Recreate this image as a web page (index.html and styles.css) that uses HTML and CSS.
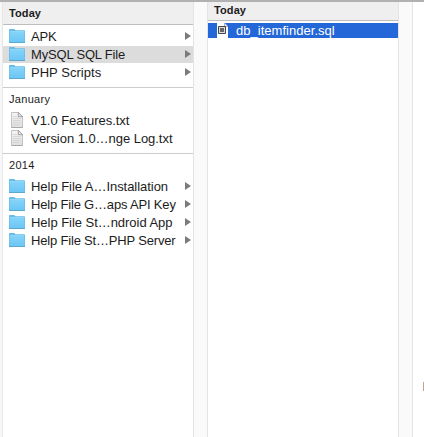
FILE: index.html
```html
<!DOCTYPE html>
<html lang="en">
<head>
<meta charset="utf-8">
<title>Finder</title>
<link rel="stylesheet" href="styles.css">
</head>
<body>
<svg class="defs" width="0" height="0" aria-hidden="true">
  <defs>
    <linearGradient id="blue" x1="0" y1="0" x2="0" y2="1"><stop offset="0" stop-color="#84d3f9"/><stop offset="1" stop-color="#6cc6f5"/></linearGradient>
    <linearGradient id="paper" x1="0" y1="0" x2="0" y2="1"><stop offset="0" stop-color="#f6f6f6"/><stop offset="1" stop-color="#dedede"/></linearGradient>
    <symbol id="folder" viewBox="0 0 16 14">
      <path d="M0 .8Q0 0 .9 0H5.2L6.6 1.2H15.2Q16 1.2 16 2V14H0Z" fill="#68bde6"/>
      <path d="M.7 3H15.3V13H.7Z" fill="url(#blue)"/>
      <path d="M.7 2.5H15.3" stroke="#8fd6f7"/>
      <path d="M0 13.5H16" stroke="#5ba9cf"/>
    </symbol>
    <symbol id="doc" viewBox="0 0 12 16">
      <path d="M.5 .5H7.5L11.5 4.5V15.5H.5Z" fill="url(#paper)" stroke="#c2c2c2"/>
      <path d="M7.3 .5V4.7H11.5Z" fill="#eee" stroke="#8c8c8c" stroke-width=".8"/>
      <path d="M2 4.5H6M2 6.5H10M2 8.5H10M2 10.5H10M2 12.5H8" stroke="#cecece" stroke-width=".7"/>
      <path d="M.5 15.5H11.5" stroke="#aaa"/>
    </symbol>
    <symbol id="sql" viewBox="0 0 11 15">
      <path d="M0 0H7.5L11 3.5V15H0Z" fill="#fff"/>
      <path d="M7.5 0V3.5H11" fill="#ddd" stroke="#777" stroke-width=".5"/>
      <path d="M1.5 3.5H8.5V10.5H1.5Z" fill="#ddd" stroke="#444"/>
      <path d="M3 5H7V9H3Z" fill="#666"/>
    </symbol>
  </defs>
</svg>
<main class="browser">
  <section class="column files">
    <h2 class="heading main-heading">Today</h2>
    <ul class="group">
      <li class="row"><svg class="folder"><use href="#folder"/></svg><span class="name tight">APK</span><i class="arrow"></i></li>
      <li class="row selected"><svg class="folder"><use href="#folder"/></svg><span class="name tight">MySQL SQL File</span><i class="arrow"></i></li>
      <li class="row"><svg class="folder"><use href="#folder"/></svg><span class="name">PHP Scripts</span><i class="arrow"></i></li>
    </ul>
    <h3 class="subheading">January</h3>
    <ul class="group documents">
      <li class="row"><svg class="doc"><use href="#doc"/></svg><span class="name snug">V1.0 Features.txt</span></li>
      <li class="row"><svg class="doc"><use href="#doc"/></svg><span class="name snug">Version 1.0…nge Log.txt</span></li>
    </ul>
    <h3 class="subheading">2014</h3>
    <ul class="group help">
      <li class="row"><svg class="folder"><use href="#folder"/></svg><span class="name snug">Help File A…Installation</span><i class="arrow"></i></li>
      <li class="row"><svg class="folder"><use href="#folder"/></svg><span class="name tight">Help File G…aps API Key</span><i class="arrow"></i></li>
      <li class="row"><svg class="folder"><use href="#folder"/></svg><span class="name snug">Help File St…ndroid App</span><i class="arrow"></i></li>
      <li class="row"><svg class="folder"><use href="#folder"/></svg><span class="name tight">Help File St…PHP Server</span><i class="arrow"></i></li>
    </ul>
  </section>
  <div class="gutter"></div>
  <section class="column contents">
    <h2 class="heading">Today</h2>
    <div class="row active"><svg class="sql"><use href="#sql"/></svg><span class="name">db_itemfinder.sql</span></div>
  </section>
  <div class="gutter"></div>
  <section class="preview"><div class="thumbnail"></div></section>
</main>
</body>
</html>
```
FILE: styles.css
```css
* { box-sizing: border-box; }
body { margin: 0; overflow: hidden; background: #fff; font-family: "Liberation Sans", Arial, sans-serif; font-size: 13px; color: #1c1c1c; }
.defs { position: absolute; }
.browser { display: grid; grid-template-columns: 190px 15px 190px 15px 1fr; height: 437px; padding-left: 3px; border-top: 2px solid #b1b1b1; background: linear-gradient(90deg, #f7f7f7 2px, #e7e7e7 2px, #e7e7e7 3px, #fff 3px); }
.heading { margin: 0; height: 19px; padding-left: 6px; background: #efefef; border-bottom: 1px solid #bdbdbd; font-size: 11px; line-height: 17px; letter-spacing: .1px; }
.main-heading { height: 23px; line-height: 23px; }
.group { list-style: none; margin: 0; padding: 3px 0 5px; }
.row { display: flex; align-items: center; height: 18px; padding: 0 2px 2px 6px; }
.selected { background: linear-gradient(#dcdcdc 17px, #fff 17px); }
.folder { width: 16px; height: 14px; margin-right: 6px; flex: none; }
.doc { width: 12px; height: 16px; margin: 0 8px 0 2px; flex: none; }
.name { margin-top: 1px; white-space: nowrap; line-height: 15px; letter-spacing: .03px; }
.snug { letter-spacing: -.04px; }
.tight { letter-spacing: -.18px; }
.arrow { margin-left: auto; border-left: 6px solid #7b7b7b; border-top: 4px solid transparent; border-bottom: 4px solid transparent; }
.subheading { margin: 0; height: 24px; padding-left: 6px; border-top: 1px solid #ccc; font-size: 11px; line-height: 23px; font-weight: 400; letter-spacing: .3px; }
.documents { padding: 1px 0 5px; }
.help { padding-top: 1px; }
.gutter { background: #fafafa; border: solid #e4e4e4; border-width: 0 1px; }
.active { height: 15px; margin-top: 2px; padding: 0 0 0 9px; background: #2367d9; color: #fff; }
.active .name { margin-top: 0; }
.sql { width: 11px; height: 15px; margin-right: 8px; flex: none; }
.preview { display: flex; justify-content: flex-end; }
.thumbnail { width: 1px; height: 9px; margin-top: 380px; background: #bda493; }
```
